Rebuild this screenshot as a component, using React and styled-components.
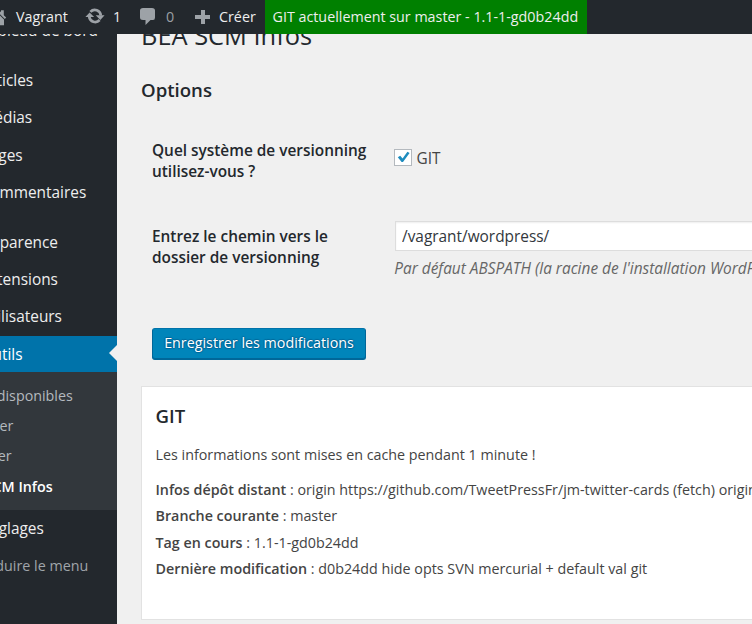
import React from 'react';
import styled, { createGlobalStyle } from 'styled-components';

const GlobalStyle = createGlobalStyle`
  * { box-sizing: border-box; }
  body {
    margin: 0;
    overflow: hidden;
    background: #f0f0f0;
    color: #444;
    font-family: 'Open Sans', 'Noto Sans', sans-serif;
    font-size: 14.3px;
  }
  h2, h3, p, ul { margin: 0; padding: 0; }
  ul { list-style: none; }
`;

const Screen = styled.div`
  display: flex;
  flex-direction: column;
  width: 752px;
  height: 624px;
  overflow: hidden;
`;

const AdminBar = styled.header`
  display: flex;
  flex: 0 0 34px;
  height: 34px;
  background: #23282d;
  color: #eee;
  font-size: 14.3px;
  line-height: 34px;
  white-space: nowrap;
`;

const BarItem = styled.div`
  display: flex;
  align-items: center;
  flex: 0 0 ${(p) => p.$width}px;
  height: 34px;
  color: ${(p) => (p.$muted ? '#9a9fa4' : '#eee')};
`;

const BarIcon = styled.svg`
  flex: none;
  width: 20px;
  height: 20px;
  margin-left: ${(p) => p.$left || 0}px;
  margin-right: ${(p) => p.$gap}px;
  fill: #9da2a7;
`;

const BranchStatus = styled.div`
  flex: 0 0 322px;
  padding-left: 7.5px;
  background: #008000;
`;

const Body = styled.div`
  display: flex;
  flex: 1;
  min-height: 0;
  overflow: hidden;
`;

const Sidebar = styled.nav`
  flex: 0 0 117px;
  overflow: hidden;
  background: #23282d;
  white-space: nowrap;
`;

const MenuItem = styled.li`
  position: relative;
  height: ${(p) => p.$height || 37}px;
  margin-top: ${(p) => p.$before || 0}px;
  line-height: ${(p) => (p.$active ? 38 : p.$height || 37)}px;
  text-indent: -19.5px;
  font-size: 15.4px;
  color: ${(p) => (p.$active ? '#fff' : '#eee')};
  background: ${(p) => (p.$active ? '#0073aa' : 'transparent')};
`;

const Pointer = styled.svg`
  position: absolute;
  top: 9px;
  right: 0;
  width: 8px;
  height: 16px;
  fill: #f0f0f0;
`;

const Submenu = styled.ul`
  height: 138px;
  padding-top: 9px;
  background: #32373c;
`;

const SubItem = styled.li`
  height: 30px;
  line-height: ${(p) => (p.$current ? 32 : 30)}px;
  text-indent: -46px;
  font-size: 14.3px;
  font-weight: ${(p) => (p.$current ? 600 : 400)};
  color: ${(p) => (p.$current ? '#fff' : '#b4b9be')};
`;

const Collapse = styled.div`
  height: 36px;
  line-height: 37px;
  text-indent: -21.5px;
  font-size: 14.3px;
  color: #a0a5aa;
`;

const Content = styled.main`
  flex: 1;
  min-width: 0;
  padding-left: 24px;
  overflow: hidden;
`;

const PageTitle = styled.h2`
  height: 17px;
  display: flex;
  align-items: flex-end;
  font-size: 25.4px;
  font-weight: 400;
  line-height: 32px;
  color: #23282d;
`;

const SectionTitle = styled.h3`
  margin: 25px 0 35px;
  height: 28px;
  font-size: 18.6px;
  font-weight: 600;
  line-height: 28px;
  color: #23282d;
`;

const FormRow = styled.div`
  display: grid;
  grid-template-columns: 242px 1fr;
  height: ${(p) => p.$height}px;
  padding-left: 11px;
`;

const Label = styled.div`
  padding-top: ${(p) => p.$top || 0}px;
  font-size: 15.4px;
  font-weight: 600;
  line-height: 21px;
  color: #23282d;
  white-space: pre-line;
`;

const CheckOption = styled.label`
  display: flex;
  align-items: center;
  gap: 4.5px;
  height: 18px;
  margin-top: 9px;
  font-size: 15.4px;
`;

const CheckText = styled.span`
  padding-top: 2px;
`;

const CheckBox = styled.span`
  display: flex;
  width: 18px;
  height: 17px;
  border: 1px solid #b4b9be;
  background: #fff;
  svg { width: 16px; height: 15px; }
`;

const Field = styled.div`
  display: flex;
  flex-direction: column;
  padding-left: 1px;
  margin-top: -5px;
  min-width: 0;
`;

const PathInput = styled.input`
  width: 400px;
  height: 30px;
  padding: 1px 6px 0;
  border: 1px solid #ddd;
  background: #fff;
  color: #32373c;
  font: 15.4px 'Open Sans', 'Noto Sans', sans-serif;
  box-shadow: inset 0 1px 2px rgba(0, 0, 0, 0.07);
  outline: none;
`;

const Hint = styled.p`
  margin: 7px 0 0 -0.7px;
  font-size: 15.4px;
  font-style: italic;
  line-height: 22px;
  color: #666;
  white-space: nowrap;
`;

const SaveButton = styled.button`
  display: block;
  width: 214px;
  height: 32px;
  margin-left: 11px;
  padding: 0 0 4px;
  border: 1px solid;
  border-color: #0073aa #006799 #006799;
  border-radius: 3px;
  background: #0085ba;
  box-shadow: inset 0 -1px 0 #006799;
  color: #fff;
  font: 14.3px 'Open Sans', 'Noto Sans', sans-serif;
  text-shadow: 0 -1px 1px #006799, 1px 0 1px #006799, 0 1px 1px #006799, -1px 0 1px #006799;
`;

const Card = styled.section`
  width: 700px;
  height: 234px;
  margin-top: 26px;
  padding: 15px 13.5px;
  border: 1px solid #e2e2e2;
  background: #fff;
  white-space: nowrap;
`;

const CardTitle = styled.h3`
  font-size: 18.6px;
  font-weight: 600;
  line-height: 28px;
  color: #23282d;
`;

const Notice = styled.p`
  margin-top: 14px;
  font-size: 14.3px;
  line-height: 22px;
`;

const InfoList = styled.ul`
  margin-top: 11px;
`;

const InfoItem = styled.li`
  height: 26.4px;
  font-size: 14.3px;
  line-height: 26px;
  strong { font-weight: 600; }
`;

const infos = [
  ['Infos dépôt distant', 'origin https://github.com/TweetPressFr/jm-twitter-cards (fetch) origin'],
  ['Branche courante', 'master'],
  ['Tag en cours', '1.1-1-gd0b24dd'],
  ['Dernière modification', 'd0b24dd hide opts SVN mercurial + default val git'],
];

export default function App() {
  return (
    <>
      <GlobalStyle />
      <Screen>
        <AdminBar>
          <BarItem $width={85}>
            <BarIcon $left={-12.5} $gap={8.5} viewBox="0 0 20 20">
              <path d="M16 8.500l2.200 2-1.400 1.500L10 5.200l-6.800 6.800-1.400-1.500L10 2.300l3 3V3.300h2.800v4.800zM10 6.600l6 6V18.300h-4v-4.500H8v4.500H4v-5.700z" />
            </BarIcon>
            Vagrant
          </BarItem>
          <BarItem $width={53}>
            <BarIcon $gap={8} viewBox="0 0 20 20">
              <path d="M5.400 4.800A6 6 0 0 1 15.800 8.500M14.600 13A6 6 0 0 1 4.200 9.800" fill="none" stroke="#9da2a7" strokeWidth="2.700" />
              <path d="M.4 10.100L4.600 5.400l4.500 4.700zM10.700 8.300h8.900l-4.300 4.700z" />
            </BarIcon>
            1
          </BarItem>
          <BarItem $width={55} $muted>
            <BarIcon $gap={8} viewBox="0 0 20 20">
              <path d="M5 1h9q3 0 3 2.500v7q0 2.500-2 2.500h-2.500L7.500 18v-5H5q-3 0-3-2.500v-7Q2 1 5 1z" />
            </BarIcon>
            0
          </BarItem>
          <BarItem $width={72}>
            <BarIcon $gap={6} viewBox="0 0 20 20">
              <path d="M17 8v4h-5v5H8v-5H2V8h6V3h4v5z" />
            </BarIcon>
            Créer
          </BarItem>
          <BranchStatus>GIT actuellement sur master - 1.1-1-gd0b24dd</BranchStatus>
        </AdminBar>
        <Body>
          <Sidebar>
            <ul>
              <MenuItem $height={28} $before={-17}>Tableau de bord</MenuItem>
              <MenuItem $before={17}>Articles</MenuItem>
              <MenuItem>Médias</MenuItem>
              <MenuItem $before={1}>Pages</MenuItem>
              <MenuItem>Commentaires</MenuItem>
              <MenuItem $before={13}>Apparence</MenuItem>
              <MenuItem>Extensions</MenuItem>
              <MenuItem>Utilisateurs</MenuItem>
              <MenuItem $height={36} $before={1} $active>
                Outils
                <Pointer viewBox="0 0 8 16"><path d="M8 0v16L0 8z" /></Pointer>
              </MenuItem>
            </ul>
            <Submenu>
              <SubItem>Outils disponibles</SubItem>
              <SubItem>Importer</SubItem>
              <SubItem>Exporter</SubItem>
              <SubItem $current>BEA SCM Infos</SubItem>
            </Submenu>
            <ul>
              <MenuItem>Réglages</MenuItem>
            </ul>
            <Collapse>Réduire le menu</Collapse>
          </Sidebar>
          <Content>
            <PageTitle>BEA SCM Infos</PageTitle>
            <SectionTitle>Options</SectionTitle>
            <FormRow $height={87}>
              <Label $top={1}>{'Quel système de versionning\nutilisez-vous ?'}</Label>
              <CheckOption>
                <CheckBox>
                  <svg viewBox="0 0 16 15"><path d="M2.800 7.200l2.400-1.400 2.400 2.600L12.400 1.800l2.200 1.200L8 12H6.600z" fill="#1e8cbe" /></svg>
                </CheckBox>
                <CheckText>GIT</CheckText>
              </CheckOption>
            </FormRow>
            <FormRow $height={102}>
              <Label>{'Entrez le chemin vers le\ndossier de versionning'}</Label>
              <Field>
                <PathInput defaultValue="/vagrant/wordpress/" />
                <Hint>Par défaut ABSPATH (la racine de l'installation WordPress)</Hint>
              </Field>
            </FormRow>
            <SaveButton>Enregistrer les modifications</SaveButton>
            <Card>
              <CardTitle>GIT</CardTitle>
              <Notice>Les informations sont mises en cache pendant 1 minute !</Notice>
              <InfoList>
                {infos.map(([name, value]) => (
                  <InfoItem key={name}><strong>{name}</strong> : {value}</InfoItem>
                ))}
              </InfoList>
            </Card>
          </Content>
        </Body>
      </Screen>
    </>
  );
}
